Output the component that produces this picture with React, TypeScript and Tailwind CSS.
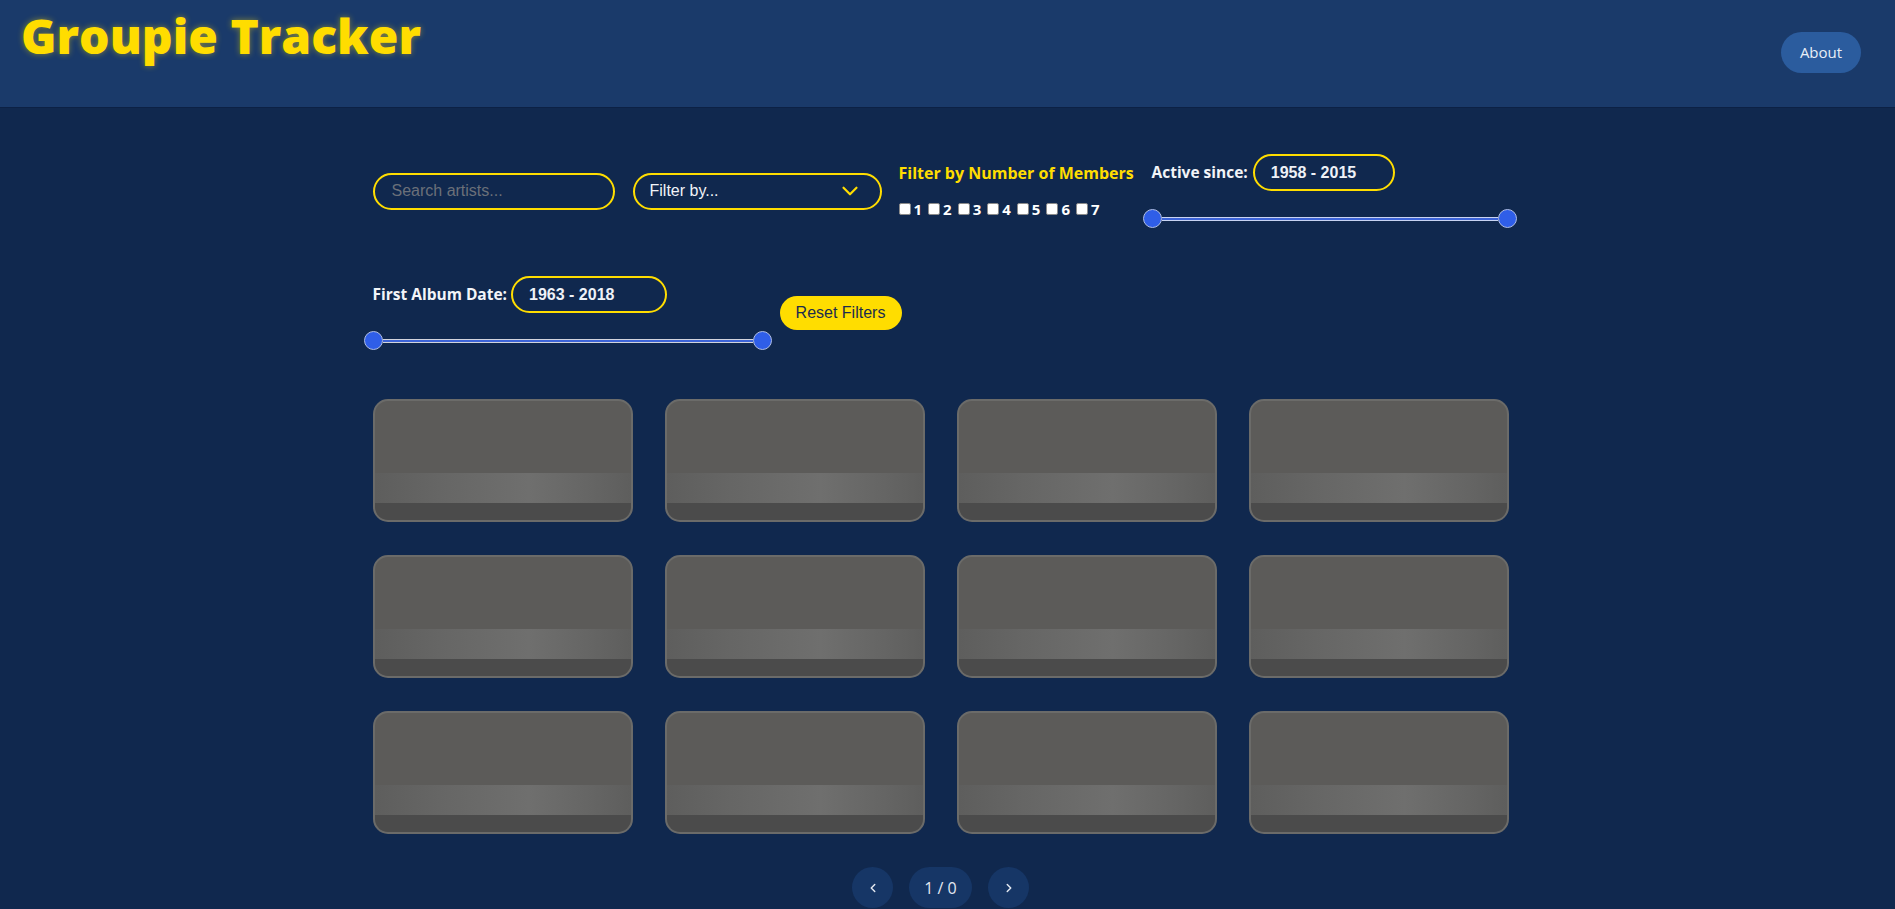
import { ChevronDown, ChevronLeft, ChevronRight } from 'lucide-react';

const poppins = { fontFamily: '"Open Sans", "Liberation Sans", sans-serif' };
const arial = { fontFamily: '"Liberation Sans", Arial, sans-serif' };

function Slider({ width, track }: { width: string; track: string }) {
    return (
        <div className={`flex items-center ${width}`}>
            <span className="h-[19px] w-[19px] shrink-0 rounded-full border border-[#aebde6] bg-[#2f5ee8]" />
            <span className={`h-[4px] flex-1 border-y bg-[#3d64d8] ${track}`} />
            <span className="h-[19px] w-[19px] shrink-0 rounded-full border border-[#aebde6] bg-[#2f5ee8]" />
        </div>
    );
}

function RangeBox({ value, width }: { value: string; width: string }) {
    return (
        <div
            className={`flex h-[37px] ${width} items-center rounded-full border-2 border-[#ffdd00] pl-[16px] text-[16px] font-bold text-[#eef1f7]`}
            style={arial}
        >
            {value}
        </div>
    );
}

function Card() {
    return (
        <div className="flex h-[123px] w-[260px] flex-col overflow-hidden rounded-[15px] border-2 border-[#6b6b69] bg-[#5c5b59]">
            <div className="h-[72px]" />
            <div className="h-[30px] bg-[linear-gradient(90deg,#5e5e5d_0%,#666665_25%,#6f6f6e_60%,#656564_85%,#5e5e5d_100%)]" />
            <div className="flex-1 rounded-b-[13px] bg-[#4b4b4b]" />
        </div>
    );
}

export default function App() {
    const members = [1, 2, 3, 4, 5, 6, 7];

    return (
        <div className="min-h-[909px] bg-[#10284e]">
            {/* Header */}
            <header className="flex h-[107px] items-start justify-between bg-[#1a3a6a] pl-[21px] pr-[34px] shadow-[0_1px_0_#0c2145]">
                <h1
                    className="text-[48px] font-extrabold leading-normal text-[#ffdd00] [text-shadow:0_0_6px_rgba(255,221,0,0.45)]"
                    style={poppins}
                >
                    Groupie Tracker
                </h1>
                <button
                    className="mt-[32px] flex h-[41px] w-[80px] items-center justify-center rounded-full bg-[#2b5c9e] text-[15px] text-[#e8eef7]"
                    style={poppins}
                >
                    About
                </button>
            </header>

            <main className="mx-auto w-[1150px] pt-[47px]">
                {/* Filters row 1 */}
                <div className="flex items-center">
                    <div
                        className="flex h-[37px] w-[242px] items-center rounded-full border-2 border-[#ffdd00] pl-[17px] text-[16px] text-[#6b7079]"
                        style={arial}
                    >
                        Search artists...
                    </div>
                    <div
                        className="ml-[18px] flex h-[37px] w-[249px] items-center justify-between rounded-full border-2 border-[#ffdd00] pl-[15px] pr-[17px] text-[16px] text-[#f2f4f8]"
                        style={arial}
                    >
                        Filter by...
                        <ChevronDown className="h-[26px] w-[26px] text-[#ffdd00]" strokeWidth={2} />
                    </div>

                    <div className="mb-[4px] ml-[17px] w-[244px]" style={poppins}>
                        <div className="text-[16px] font-bold leading-[20px] text-[#ffdd00]">
                            Filter by Number of Members
                        </div>
                        <div className="mt-[19px] flex items-center text-[15px] font-bold leading-[14px] text-white">
                            {members.map((n) => (
                                <label key={n} className="mr-[6px] flex items-center gap-[3px]">
                                    <span className="h-[12px] w-[12px] rounded-[2px] border border-[#8a8a8a] bg-white" />
                                    {n}
                                </label>
                            ))}
                        </div>
                    </div>

                    <div className="flex flex-col">
                        <div className="flex items-center pl-[9px]">
                            <span className="mr-[5px] text-[15.5px] font-bold text-[#f2f4f8]" style={poppins}>
                                Active since:
                            </span>
                            <RangeBox value="1958 - 2015" width="w-[142px]" />
                        </div>
                        <div className="mt-[18px]">
                            <Slider width="w-[374px]" track="border-[#c9d4f2]" />
                        </div>
                    </div>
                </div>

                {/* Filters row 2 */}
                <div className="mt-[48px] -ml-[9px] flex items-center">
                    <div className="flex flex-col">
                        <div className="flex items-center pl-[9px]">
                            <span className="mr-[4px] text-[15.5px] font-bold text-[#f2f4f8]" style={poppins}>
                                First Album Date:
                            </span>
                            <RangeBox value="1963 - 2018" width="w-[156px]" />
                        </div>
                        <div className="mt-[18px]">
                            <Slider width="w-[408px]" track="border-[#d2d4dc]" />
                        </div>
                    </div>
                    <button
                        className="ml-[8px] h-[34px] w-[122px] rounded-full bg-[#ffdd00] text-[16px] text-[#1b2c4f]"
                        style={arial}
                    >
                        Reset Filters
                    </button>
                </div>

                {/* Cards + pagination */}
                <div className="mt-[49px] w-[1136px]">
                    <div className="grid grid-cols-[repeat(4,260px)] gap-x-[32px] gap-y-[33px]">
                        {Array.from({ length: 12 }).map((_, i) => (
                            <Card key={i} />
                        ))}
                    </div>
                    <div className="mt-[33px] flex items-center justify-center gap-[16px] text-[16px] text-[#e3e8f1]" style={poppins}>
                        <button className="flex h-[41px] w-[41px] items-center justify-center rounded-full bg-[#163666]">
                            <ChevronLeft className="h-[14px] w-[14px]" strokeWidth={2.5} />
                        </button>
                        <span className="flex h-[41px] w-[63px] items-center justify-center rounded-full bg-[#163666]">
                            1 / 0
                        </span>
                        <button className="flex h-[41px] w-[41px] items-center justify-center rounded-full bg-[#163666]">
                            <ChevronRight className="h-[14px] w-[14px]" strokeWidth={2.5} />
                        </button>
                    </div>
                </div>
            </main>
        </div>
    );
}
